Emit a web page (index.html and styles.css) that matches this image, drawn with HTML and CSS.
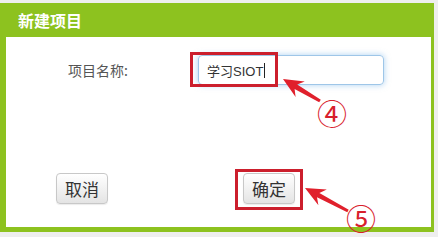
FILE: index.html
```html
<!DOCTYPE html>
<html lang="zh">
<head>
<meta charset="utf-8">
<title>新建项目</title>
<link rel="stylesheet" href="styles.css">
</head>
<body>
<div class="dialog">
  <div class="header">新建项目</div>
  <div class="content">
    <div class="field">
      <label class="label">项目名称:</label>
      <div class="input"><span class="value">学习SIOT</span><span class="caret"></span></div>
    </div>
    <div class="actions">
      <button class="btn">取消</button>
      <button class="btn btn-ok">确定</button>
    </div>
  </div>
</div>
<div class="mark mark-input"></div>
<div class="mark mark-ok"></div>
<svg class="arrows" width="438" height="237" viewBox="0 0 438 237">
  <polygon fill="#e0202c" points="283,79 304.8,81.5 297.2,84.5 320.8,99.7 319.2,102.3 294.6,88.9 295.6,96.9"/>
  <polygon fill="#e0202c" points="305,188 326.8,189.5 319.4,192.9 348.7,209.7 347.3,212.3 317,197.3 318.4,205.3"/>
</svg>
<span class="num num4">④</span>
<span class="num num5">⑤</span>
</body>
</html>
```
FILE: styles.css
```css
html, body {
  margin: 0;
  padding: 0;
}
body {
  width: 438px;
  height: 237px;
  background: #eeeeee;
  position: relative;
  overflow: hidden;
  font-family: "Liberation Sans", "Noto Sans CJK SC", sans-serif;
}
.dialog {
  margin-top: 3px;
  width: 425px;
  height: 224px;
  border-left: 6px solid #8dc21f;
  border-right: 3px solid #8dc21f;
  border-bottom: 5px solid #8dc21f;
  background: #ffffff;
  display: flex;
  flex-direction: column;
}
.header {
  height: 34px;
  background: #8dc21f;
  color: #ffffff;
  font-weight: bold;
  font-size: 16px;
  line-height: 34px;
  padding-left: 12px;
  font-family: "Noto Sans CJK SC", sans-serif;
}
.content {
  padding-top: 18px;
  display: flex;
  flex-direction: column;
}
.field {
  display: flex;
  align-items: center;
}
.label {
  margin-left: 62px;
  width: 130px;
  font-size: 14px;
  color: #555555;
  font-family: "Noto Sans CJK SC", sans-serif;
}
.input {
  width: 176px;
  height: 28px;
  border: 1px solid #9ec6e8;
  border-radius: 4px;
  box-shadow: 0 0 6px rgba(102, 170, 230, 0.55);
  padding-left: 8px;
  display: flex;
  align-items: center;
  font-size: 13px;
  color: #333333;
}
.caret {
  width: 1px;
  height: 15px;
  background: #222222;
  margin-left: 1px;
}
.actions {
  display: flex;
  margin-top: 88px;
  padding-left: 50px;
  gap: 135px;
}
.btn {
  width: 52px;
  height: 31px;
  padding: 0;
  border: 1px solid #c8c8c8;
  border-radius: 4px;
  background: linear-gradient(#ffffff, #e4e4e4);
  box-shadow: 0 1px 1px rgba(0, 0, 0, 0.08);
  font-size: 17px;
  color: #333333;
  font-family: "Noto Sans CJK SC", sans-serif;
  line-height: 29px;
}
.mark {
  position: absolute;
  border: 3px solid #cc1f2d;
  box-sizing: border-box;
}
.mark-input {
  left: 190px;
  top: 52px;
  width: 88px;
  height: 35px;
}
.mark-ok {
  left: 235px;
  top: 169px;
  width: 68px;
  height: 41px;
}
.arrows {
  position: absolute;
  left: 0;
  top: 0;
}
.num {
  position: absolute;
  color: #d8202c;
  font-family: "Noto Sans CJK SC", sans-serif;
  font-size: 30px;
  line-height: 30px;
}
.num4 {
  left: 317px;
  top: 97px;
}
.num5 {
  left: 346px;
  top: 202px;
}
```
